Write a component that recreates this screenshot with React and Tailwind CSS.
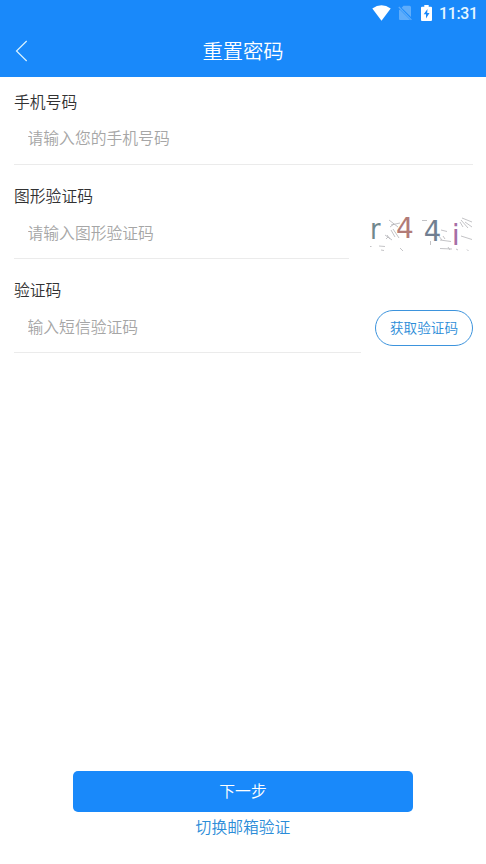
import React, { useState } from 'react'

const fields = [
  { name: 'phone', label: '手机号码', placeholder: '请输入您的手机号码', box: 'w-[459px]' },
  { name: 'captcha', label: '图形验证码', placeholder: '请输入图形验证码', box: 'w-[335px] pt-[2px]' },
  { name: 'code', label: '验证码', placeholder: '输入短信验证码', box: 'w-[347px] pt-[2px]' }
]

const StatusBar = () => (
  <div className="flex h-[27px] items-center justify-end pr-[9px] text-white">
    <svg width="19" height="16" viewBox="0 0 20 16" preserveAspectRatio="none" className="mr-[7px] -mt-[1px]">
      <path d="M0.3 3.6 Q10 -3 19.7 3.6 L10 15.8 Z" fill="#fff" />
    </svg>
    <svg width="14" height="16" viewBox="0 0 14 16" className="mr-[9px] -mt-[1px]">
      <path d="M5.5 0.8 H11.5 Q13 0.8 13 2.3 V12 L3.6 2.7 Z M1.8 4.6 L12 14.8 Q11.8 15 11.5 15 H2 Q1 15 1 14 V5.3 Z" fill="#5fadfb" />
      <path d="M0.8 2 L13.4 14.8" stroke="#5fadfb" strokeWidth="1.2" />
    </svg>
    <svg width="11" height="16" viewBox="0 0 11 16" className="mr-[7px] -mt-[1px]">
      <path d="M3.3 0 H7.7 V1.7 H10 Q11 1.7 11 2.7 V15 Q11 16 10 16 H1 Q0 16 0 15 V2.7 Q0 1.7 1 1.7 H3.3 Z" fill="#fff" />
      <path d="M6.5 4 L2.7 9.3 H5 V13.4 L8.5 7.9 H6.2 Z" fill="#1989fa" />
    </svg>
    <span className="w-[38px] whitespace-nowrap font-[Roboto] text-[15.8px] font-medium leading-[27px] tracking-[-0.25px] text-[#e6f7ff]">11:31</span>
  </div>
)

const Captcha = () => (
  <svg width="104" height="44" viewBox="369 210 104 44" className="shrink-0 overflow-visible">
    <g stroke="#b4b4b8" strokeWidth="0.8" fill="none">
      <path d="M389 220 L398 227 M391 225 L400 223 M390 227 L394 224 M385 235 L392 240 M387 235 L390 239 M391 230 L395 237 M393 229 L399 238 M386 239 L388 237" />
      <path d="M370 246.5 H371.5 M379 246 L385 246.5 M381 250 L384 250.5 M400 248 L403 251" />
      <path d="M422 220.5 H427 M430.5 241 V245 M438 235 L442 240 M441 230 L447 231.5 M440 240 L451 241.5 M443 236 L445 239" />
      <path d="M462 218 L472 222 M460 222 L463 227 M461 220 L468 228 M465 222 L472 227 M461 236 L472 239.5" />
      <path d="M440 248.5 L452 249 M448 247 L450 250 M456 249 L458 250 M467 249.5 L468.5 251" />
    </g>
    <g fontFamily="DejaVu Sans" fontWeight="400" textAnchor="middle">
      <text x="375.2" y="238.5" fontSize="28" textLength="10.5" lengthAdjust="spacingAndGlyphs" fill="#71878d">r</text>
      <text x="405" y="238" fontSize="28" fill="#b27b77">4</text>
      <text x="432.5" y="241" fontSize="29" textLength="17.5" lengthAdjust="spacingAndGlyphs" fill="#717f91">4</text>
      <text x="455.7" y="245" fontSize="29" fill="#a66fa5">i</text>
    </g>
  </svg>
)

const Field = ({ field, value, onChange, children }) => (
  <div className="flex h-[94px] flex-col justify-end">
    <label htmlFor={field.name} className="h-[20px] text-[15.8px] leading-[20px] text-[#323233]">
      {field.label}
    </label>
    <div className="flex h-[53px] justify-between">
      <input
        id={field.name}
        value={value}
        onChange={onChange}
        placeholder={field.placeholder}
        className={`${field.box} border-b border-[#ebebeb] pl-[13.5px] text-[15.8px] text-[#323233] outline-none placeholder:text-[#a6a6a6]`}
      />
      {children}
    </div>
  </div>
)

const App = () => {
  const [form, setForm] = useState({ phone: '', captcha: '', code: '' })

  const bind = (field) => ({
    field,
    value: form[field.name],
    onChange: (e) => setForm({ ...form, [field.name]: e.target.value })
  })

  return (
    <div className="flex h-screen flex-col overflow-hidden bg-white font-['Noto_Sans_CJK_SC',sans-serif] font-[350]">
      <header className="h-[77px] shrink-0 bg-[#1989fa]">
        <StatusBar />
        <div className="grid h-[48px] grid-cols-[60px_1fr_60px] items-center">
          <button type="button" aria-label="返回" className="pl-[15px]">
            <svg width="13" height="22" viewBox="0 0 13 22" fill="none" stroke="#d9f3ff" strokeWidth="1.2">
              <path d="M11.7 1 L1.5 11 L11.7 21" />
            </svg>
          </button>
          <h1 className="pb-[2px] text-center text-[20.3px] leading-[30px] text-white">重置密码</h1>
        </div>
      </header>

      {/* Formulario */}
      <form className="-mt-[6px] flex flex-col pl-[14px] pr-[13px]">
        <Field {...bind(fields[0])} />
        <Field {...bind(fields[1])}>
          <div className="flex pt-[4px]">
            <Captcha />
          </div>
        </Field>
        <Field {...bind(fields[2])}>
          <button
            type="button"
            className="mt-[10px] h-[36px] w-[98px] rounded-full border border-[#3d94dd] pb-[2px] text-[13.6px] leading-[32px] text-[#2b8cd8]"
          >
            获取验证码
          </button>
        </Field>
      </form>

      {/* Acciones */}
      <footer className="mt-auto flex flex-col items-center pb-[25px]">
        <button type="button" className="h-[41px] w-[340px] rounded-[5px] bg-[#1989fa] pb-[2px] text-[15.8px] text-white">
          下一步
        </button>
        <button type="button" className="mt-[3px] h-[24px] text-[15.8px] leading-[24px] text-[#2b8cd8]">
          切换邮箱验证
        </button>
      </footer>
    </div>
  )
}

export default App
